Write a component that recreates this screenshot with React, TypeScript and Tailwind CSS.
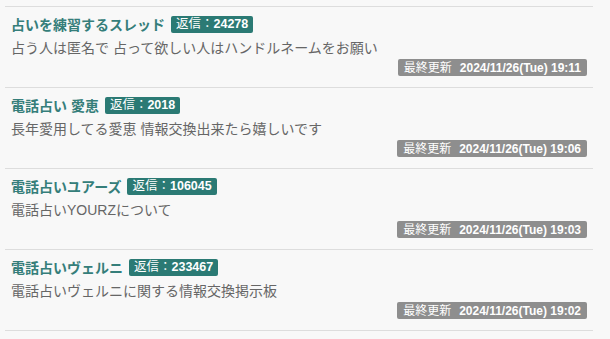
import React from 'react';

interface Thread {
  id: number;
  title: string;
  replies: number;
  description: string;
  updated: string;
}

const threads: Thread[] = [
  {
    id: 1,
    title: '占いを練習するスレッド',
    replies: 24278,
    description: '占う人は匿名で 占って欲しい人はハンドルネームをお願い',
    updated: '2024/11/26(Tue) 19:11',
  },
  {
    id: 2,
    title: '電話占い 愛恵',
    replies: 2018,
    description: '長年愛用してる愛恵 情報交換出来たら嬉しいです',
    updated: '2024/11/26(Tue) 19:06',
  },
  {
    id: 3,
    title: '電話占いユアーズ',
    replies: 106045,
    description: '電話占いYOURZについて',
    updated: '2024/11/26(Tue) 19:03',
  },
  {
    id: 4,
    title: '電話占いヴェルニ',
    replies: 233467,
    description: '電話占いヴェルニに関する情報交換掲示板',
    updated: '2024/11/26(Tue) 19:02',
  },
];

const ThreadRow: React.FC<{ thread: Thread }> = ({ thread }) => (
  <div className="border-t border-[#dddddd] h-[81px] px-[6px] pt-[9px]">
    <div className="flex items-center h-[17px]">
      <span className="text-[14px] font-bold text-[#357e7a] leading-none">{thread.title}</span>
      <span className="ml-[6px] h-[17px] flex items-center px-[5px] rounded-[2px] bg-[#2b7a74] text-white text-[12.5px] leading-none">
        <span>返信：</span>
        <span className="font-bold">{thread.replies}</span>
      </span>
    </div>
    <p className="mt-[6px] text-[14px] text-[#666666] leading-[18px]">{thread.description}</p>
    <div className="flex justify-end mt-[2px]">
      <span className="h-[17px] flex items-center px-[6px] rounded-[2px] bg-[#8e8e8e] text-white text-[12px] font-bold leading-none">
        <span className="mr-[8px] font-normal">最終更新</span>
        {thread.updated}
      </span>
    </div>
  </div>
);

const App: React.FC = () => {
  return (
    <div
      className="w-[610px] h-[339px] bg-[#f8f8f8] pt-[6px] pl-[5px] pr-[17px] overflow-hidden"
      style={{ fontFamily: '"Liberation Sans", "Noto Sans CJK JP", sans-serif' }}
    >
      <div className="border-b border-[#dddddd]">
        {threads.map((t) => (
          <ThreadRow key={t.id} thread={t} />
        ))}
      </div>
    </div>
  );
};

export default App;
